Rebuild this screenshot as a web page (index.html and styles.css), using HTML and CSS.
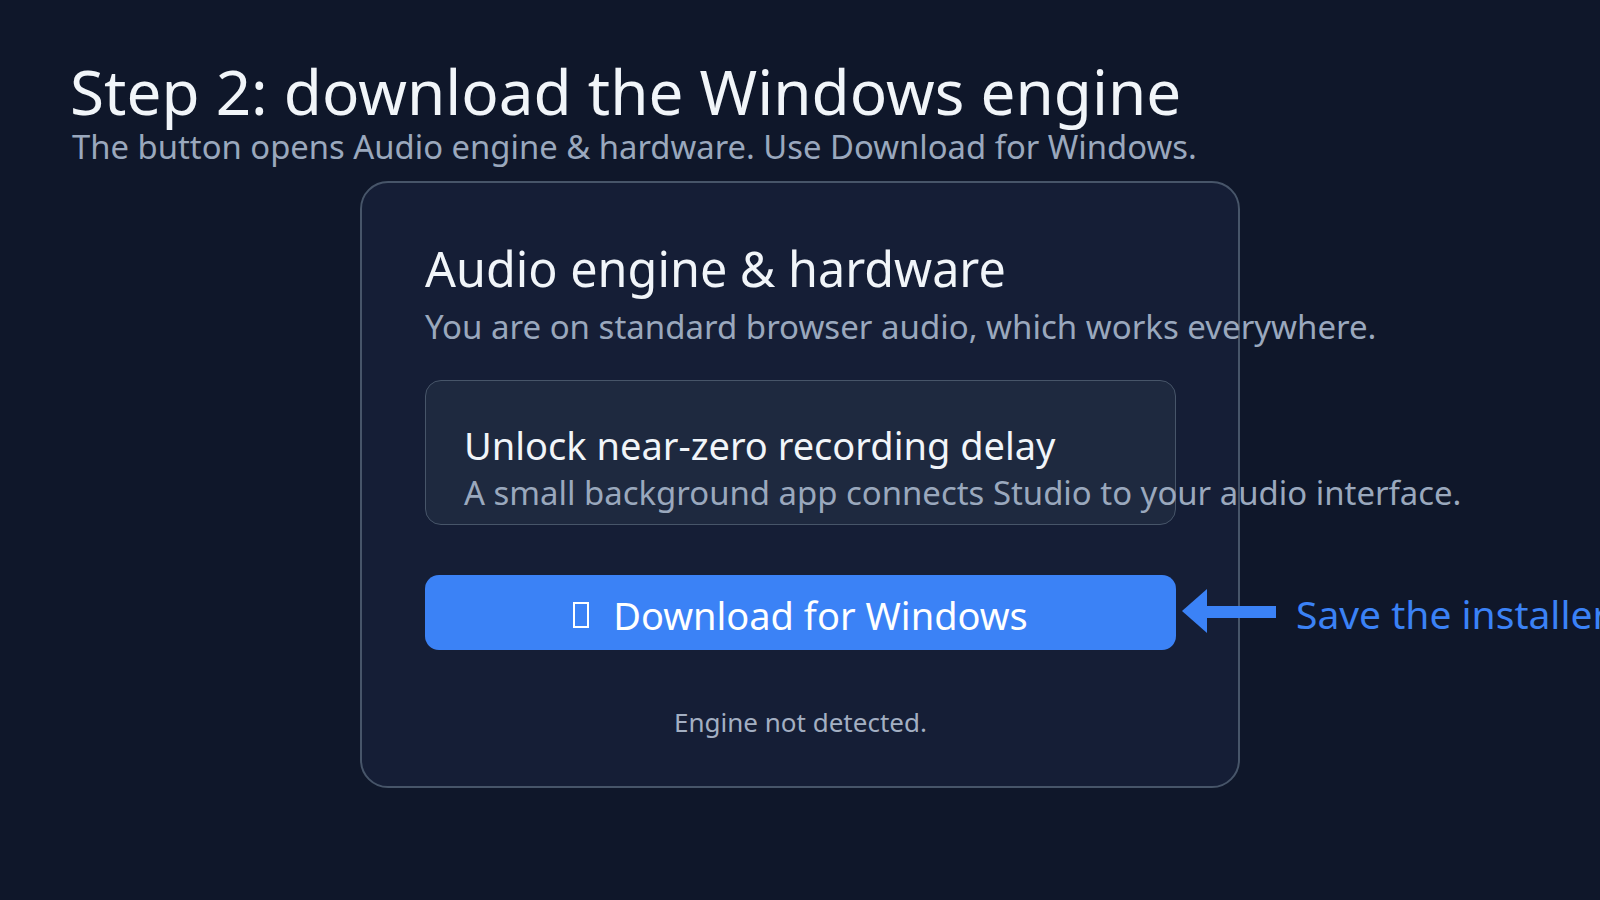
FILE: index.html
```html
<!DOCTYPE html>
<html lang="en">
<head>
    <meta charset="UTF-8">
    <meta name="viewport" content="width=device-width, initial-scale=1.0">
    <title>Step 2: download the Windows engine</title>
    <link rel="stylesheet" href="styles.css">
</head>
<body>

    <main class="page">
        <header class="intro">
            <h1>Step 2: download the Windows engine</h1>
            <p>The button opens Audio engine &amp; hardware. Use Download for Windows.</p>
        </header>

        <section class="card">
            <h2 class="card-title">Audio engine &amp; hardware</h2>
            <p class="card-lead">You are on standard browser audio, which works everywhere.</p>

            <div class="promo">
                <h3>Unlock near-zero recording delay</h3>
                <p>A small background app connects Studio to your audio interface.</p>
            </div>

            <div class="download">
                <button class="download-btn"><span class="icon-missing"></span>Download for Windows</button>
                <div class="callout">
                    <svg class="callout-arrow" width="94" height="44" viewBox="0 0 94 44">
                        <polygon points="0,22 25,0 25,44" fill="#3b82f6"/>
                        <rect x="24" y="17" width="70" height="12" fill="#3b82f6"/>
                    </svg>
                    <span class="callout-label">Save the installer</span>
                </div>
            </div>

            <p class="status">Engine not detected.</p>
        </section>
    </main>

</body>
</html>
```

FILE: styles.css
```css
html, body {
    margin: 0;
    height: 100%;
    overflow: hidden;
}

body {
    font-family: "Noto Sans", "Open Sans", sans-serif;
    background-color: #0f172a;
    color: #f1f5f9;
}

.page {
    padding: 57px 0 0 70px;
}

.intro h1 {
    margin: 0;
    font-size: 62px;
    font-weight: 400;
    line-height: 1.1;
    color: #f1f5f9;
}

.intro p {
    margin: 1px 0 0 2px;
    font-size: 32.8px;
    line-height: 1.3;
    color: #9aa8bd;
}

.card {
    box-sizing: border-box;
    width: 880px;
    margin: 12px 0 0 290px;
    padding: 56px 62px 46px 63px;
    background: #151e36;
    border: 2px solid #475569;
    border-radius: 28px;
}

.card-title {
    margin: 0;
    font-size: 48.5px;
    font-weight: 400;
    line-height: 1.2;
    white-space: nowrap;
}

.card-lead {
    margin: 7px 0 0;
    font-size: 33px;
    line-height: 1.4;
    color: #9aa8bd;
    white-space: nowrap;
}

.promo {
    margin-top: 30px;
    padding: 41px 38px 11px;
    background: #1e293f;
    border: 1px solid #475569;
    border-radius: 16px;
}

.promo h3 {
    margin: 0;
    font-size: 38px;
    font-weight: 400;
    line-height: 1.25;
    white-space: nowrap;
}

.promo p {
    margin: 2px 0 0;
    font-size: 32.9px;
    line-height: 1.25;
    color: #9aa8bd;
    white-space: nowrap;
}

.download {
    position: relative;
    margin-top: 50px;
}

.download-btn {
    display: flex;
    align-items: center;
    justify-content: center;
    width: 100%;
    height: 75px;
    padding: 6px 0 0;
    border: none;
    border-radius: 14px;
    background-color: #3b82f6;
    color: white;
    font-family: inherit;
    font-size: 38px;
    cursor: pointer;
}

.icon-missing {
    box-sizing: border-box;
    width: 16px;
    height: 26px;
    margin-right: 24px;
    border: 2px solid white;
}

.callout {
    position: absolute;
    top: 12px;
    left: calc(100% + 6px);
    display: flex;
    align-items: flex-start;
    gap: 20px;
    white-space: nowrap;
}

.callout-arrow {
    margin-top: 2px;
}

.callout-label {
    font-size: 39px;
    color: #3b82f6;
}

.status {
    margin: 54px 0 0;
    text-align: center;
    font-size: 26px;
    line-height: 1.4;
    color: #a3afc2;
}
```
